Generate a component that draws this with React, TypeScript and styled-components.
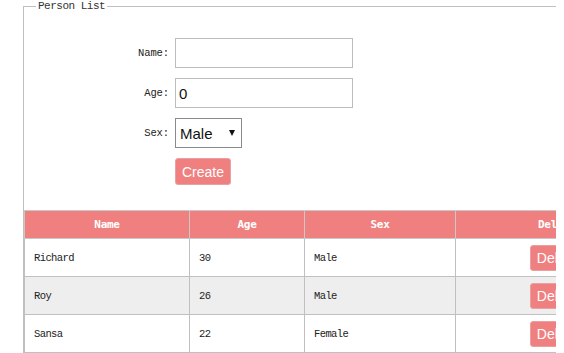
import React, { useState } from "react";
import styled, { createGlobalStyle } from "styled-components";

const Global = createGlobalStyle`
  body {
    margin: 0 8px 8px 8px;
    background: #fff;
    font-family: "Liberation Mono", "DejaVu Sans Mono", monospace;
    overflow: hidden;
  }
`;

const Fieldset = styled.fieldset`
  margin: 0 0 0 15px;
  padding: 0;
  border: 1px solid #c0c0c0;
  width: 637px;
  box-sizing: border-box;
`;

const Legend = styled.legend`
  margin-left: 12px;
  padding: 0 2px;
  font-family: "Liberation Mono", monospace;
  font-size: 11px;
  color: #333;
  letter-spacing: -0.5px;
  line-height: 12px;
`;

const Form = styled.div`
  display: grid;
  grid-template-columns: 146px auto;
  grid-auto-rows: 30px;
  column-gap: 5px;
  row-gap: 10px;
  padding-top: 26px;
  justify-content: start;
`;

const Label = styled.label`
  display: flex;
  align-items: center;
  justify-content: flex-end;
  padding-right: 1px;
  font-family: "Liberation Mono", monospace;
  font-size: 10.5px;
  letter-spacing: -0.1px;
  color: #222;
`;

const TextInput = styled.input`
  width: 178px;
  height: 30px;
  box-sizing: border-box;
  border: 1px solid #bdbdbd;
  padding: 0 3px;
  font-family: "Liberation Sans", Arial, sans-serif;
  font-size: 15px;
  color: #111;
  outline: none;
`;

const SelectBox = styled.div`
  position: relative;
  width: 67px;
  height: 30px;
  box-sizing: border-box;
  border: 1px solid #8a8a8a;
  display: flex;
  align-items: center;
  padding-left: 4px;
  font-family: "Liberation Sans", Arial, sans-serif;
  font-size: 15px;
  color: #111;
`;

const Caret = styled.span`
  position: absolute;
  right: 6px;
  top: 11px;
  width: 0;
  height: 0;
  border-left: 3.5px solid transparent;
  border-right: 3.5px solid transparent;
  border-top: 6px solid #111;
`;

const Button = styled.button`
  height: 27px;
  padding: 0 6px;
  border: 1px solid #e8a0a0;
  border-radius: 3px;
  background: #f08080;
  color: #fff;
  font-family: "Liberation Sans", Arial, sans-serif;
  font-size: 14px;
  cursor: pointer;
`;

const CreateCell = styled.div`
  grid-column: 2;
  display: flex;
  align-items: flex-start;
`;

const Table = styled.table`
  margin-top: 22px;
  width: 100%;
  border-collapse: collapse;
  table-layout: fixed;
`;

const Th = styled.th<{ $w?: number }>`
  ${(p) => (p.$w ? `width: ${p.$w}px;` : "")}
  height: 27px;
  padding: 0;
  background: #f08080;
  color: #fff;
  border: 1px solid #c8c8c8;
  font-family: "DejaVu Sans Mono", monospace;
  font-weight: bold;
  font-size: 11px;
  letter-spacing: -0.3px;
  text-align: center;
`;

const Tr = styled.tr<{ $alt?: boolean }>`
  background: ${(p) => (p.$alt ? "#eeeeee" : "#ffffff")};
`;

const Td = styled.td<{ $center?: boolean }>`
  height: 37px;
  padding: 0 0 0 9px;
  border: 1px solid #c0c0c0;
  font-family: "Liberation Mono", monospace;
  font-size: 10.5px;
  letter-spacing: -0.6px;
  color: #222;
  text-align: ${(p) => (p.$center ? "center" : "left")};
  ${(p) => (p.$center ? "padding: 0;" : "")}
`;

const DeleteButton = styled(Button)`
  height: 26px;
`;

const people = [
  { name: "Richard", age: 30, sex: "Male" },
  { name: "Roy", age: 26, sex: "Male" },
  { name: "Sansa", age: 22, sex: "Female" },
];

export default function App() {
  const [name, setName] = useState("");
  const [age, setAge] = useState("0");
  return (
    <>
      <Global />
      <Fieldset>
        <Legend>Person List</Legend>
        <Form>
          <Label>Name:</Label>
          <TextInput value={name} onChange={(e) => setName(e.target.value)} />
          <Label>Age:</Label>
          <TextInput value={age} onChange={(e) => setAge(e.target.value)} />
          <Label>Sex:</Label>
          <div>
            <SelectBox>
              Male
              <Caret />
            </SelectBox>
          </div>
          <CreateCell>
            <Button>Create</Button>
          </CreateCell>
        </Form>
        <Table>
          <thead>
            <tr>
              <Th $w={164}>Name</Th>
              <Th $w={114}>Age</Th>
              <Th $w={150}>Sex</Th>
              <Th>Delete</Th>
            </tr>
          </thead>
          <tbody>
            {people.map((p, i) => (
              <Tr key={p.name} $alt={i === 1}>
                <Td>{p.name}</Td>
                <Td>{p.age}</Td>
                <Td>{p.sex}</Td>
                <Td $center>
                  <DeleteButton>Delete</DeleteButton>
                </Td>
              </Tr>
            ))}
          </tbody>
        </Table>
      </Fieldset>
    </>
  );
}
